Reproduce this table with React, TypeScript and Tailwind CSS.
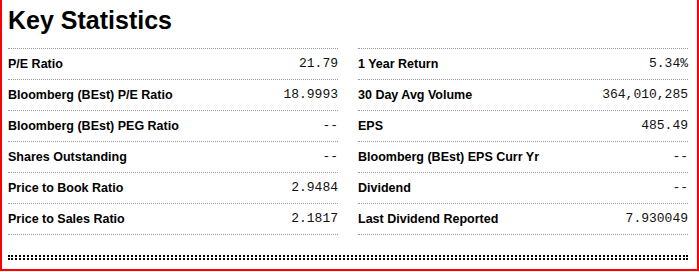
const left: [string, string][] = [
  ['P/E Ratio', '21.79'],
  ['Bloomberg (BEst) P/E Ratio', '18.9993'],
  ['Bloomberg (BEst) PEG Ratio', '--'],
  ['Shares Outstanding', '--'],
  ['Price to Book Ratio', '2.9484'],
  ['Price to Sales Ratio', '2.1817'],
]

const right: [string, string][] = [
  ['1 Year Return', '5.34%'],
  ['30 Day Avg Volume', '364,010,285'],
  ['EPS', '485.49'],
  ['Bloomberg (BEst) EPS Curr Yr', '--'],
  ['Dividend', '--'],
  ['Last Dividend Reported', '7.930049'],
]

function StatColumn({ rows }: { rows: [string, string][] }) {
  return (
    <div className="border-b border-dotted border-[#999]">
      {rows.map(([label, value]) => (
        <div
          key={label}
          className="flex items-center justify-between h-[31px] border-t border-dotted border-[#999]"
        >
          <span className="font-bold text-[12.5px] text-black">{label}</span>
          <span className="text-[13px] text-[#111] font-['Liberation_Mono',monospace]">{value}</span>
        </div>
      ))}
    </div>
  )
}

export default function App() {
  return (
    <div className="w-[699px] h-[271px] bg-white border-l-2 border-r-2 border-b-2 border-[#ff0000] pl-[6px] pr-[9px] pt-[5px] font-['Liberation_Sans',Arial,sans-serif]">
      <h1 className="text-[25px] leading-[30px] font-bold text-black mb-[13px]">Key Statistics</h1>
      <div className="grid grid-cols-2 gap-x-5">
        <StatColumn rows={left} />
        <StatColumn rows={right} />
      </div>
      <div className="mt-[20px] h-[5px] border-y-2 border-dotted border-black" />
    </div>
  )
}
